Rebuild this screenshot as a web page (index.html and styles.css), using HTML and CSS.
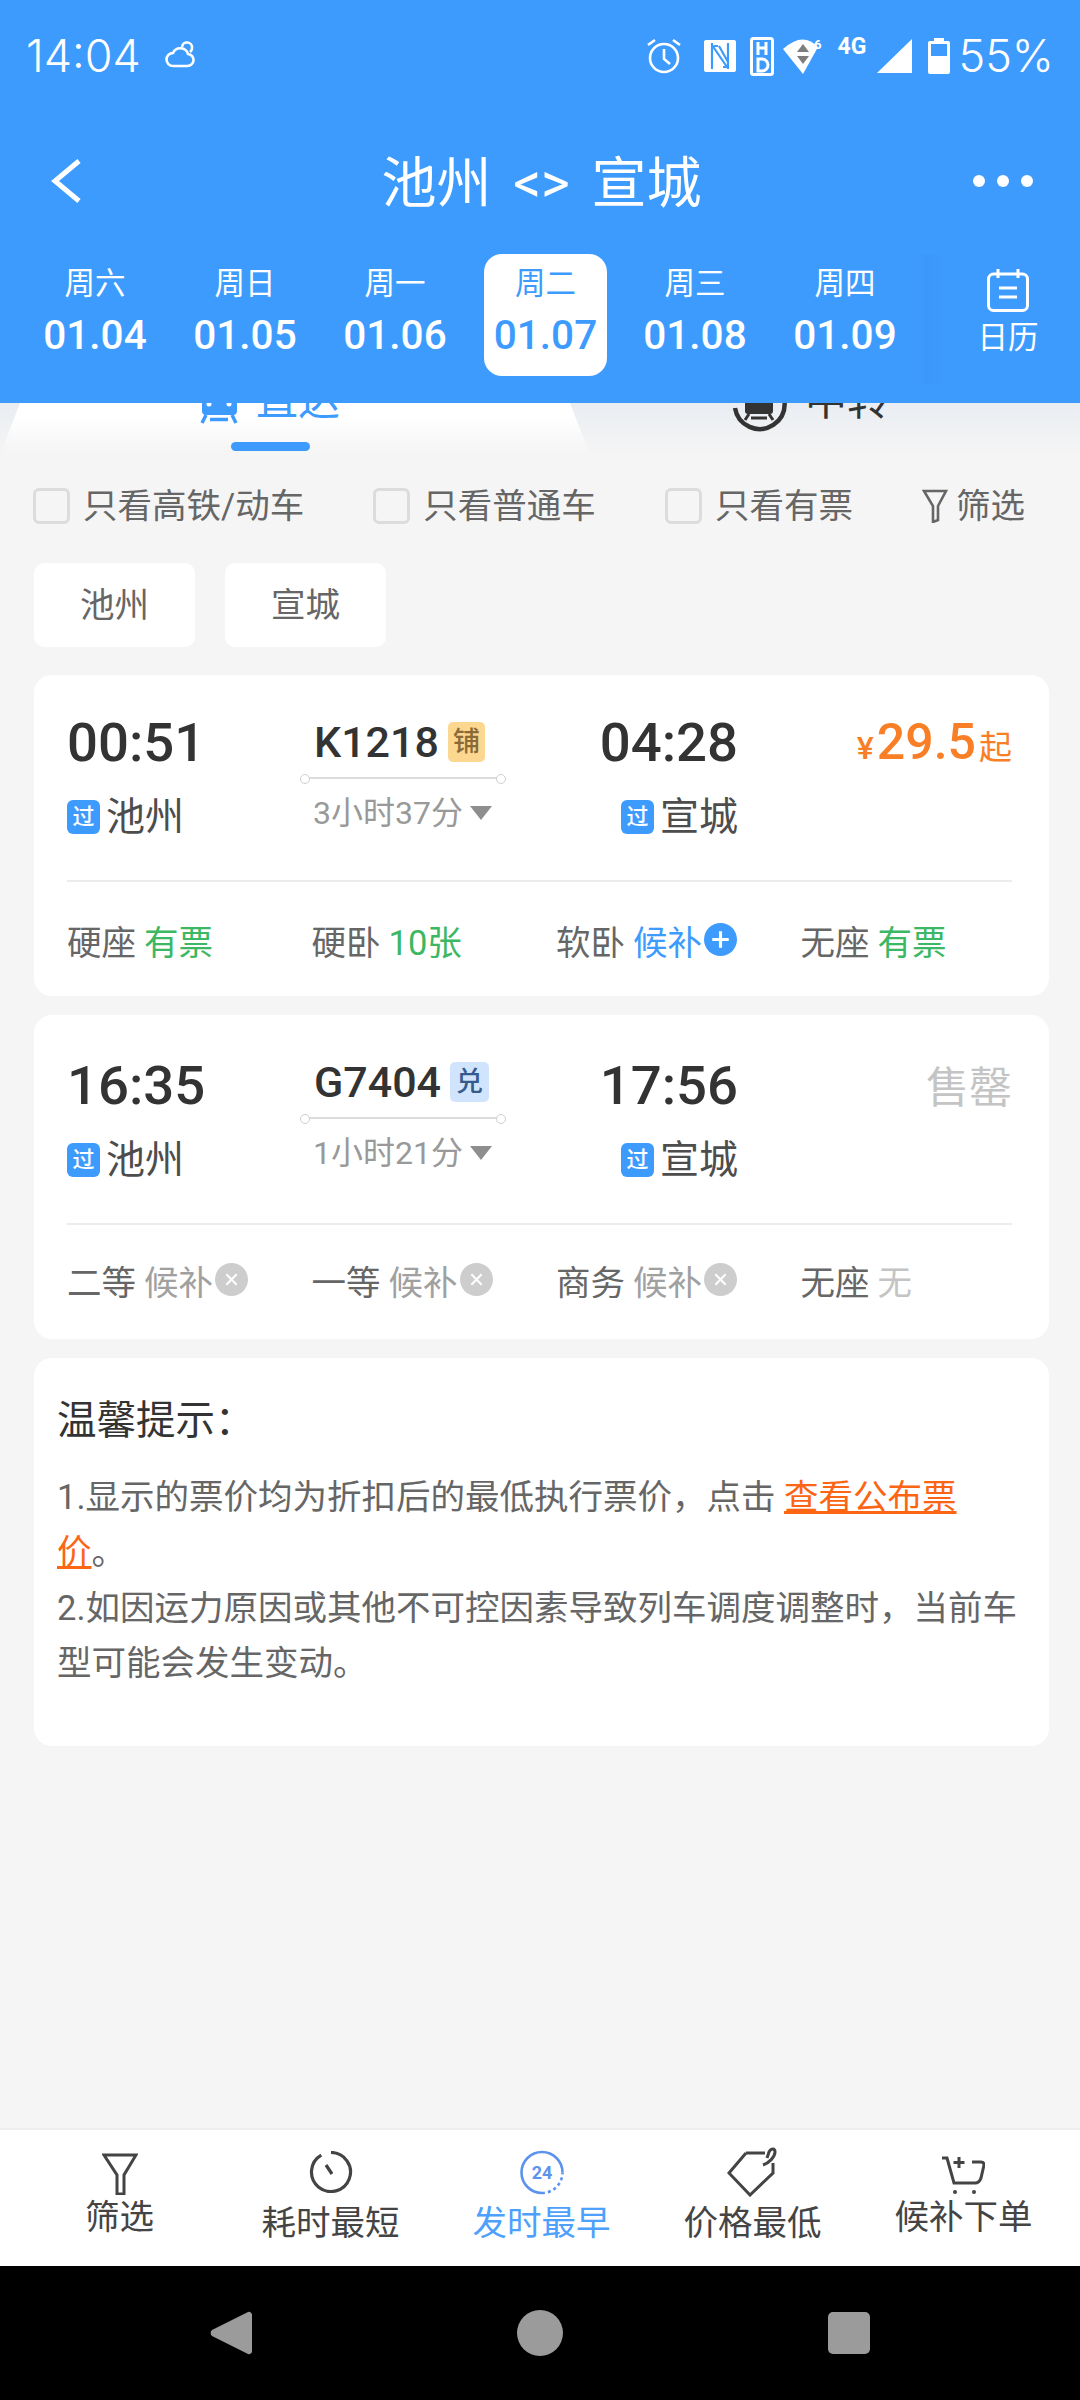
FILE: index.html
```html
<!DOCTYPE html>
<html lang="zh">
<head>
<meta charset="utf-8">
<title>池州 &lt;&gt; 宣城</title>
<link rel="stylesheet" href="styles.css">
</head>
<body>
<div class="page">
  <header class="header">
    <div class="status">
      <div class="status-left">
        <span class="clock">14:04</span>
        <svg class="ic-cloud" viewBox="0 0 30 28" fill="none" stroke="#fff" stroke-width="2.6"><path d="M8 25h14a6 6 0 0 0 1-12 8 8 0 0 0-15-1 6.500 6.500 0 0 0 0 13z"/><path d="M17 6a5 5 0 0 1 10 1 5 5 0 0 1-2 4"/></svg>
      </div>
      <div class="status-right">
        <svg class="ic-alarm" viewBox="0 0 36 36" fill="none" stroke="#fff" stroke-width="2.6"><circle cx="18" cy="20" r="14"/><path d="M18 11v10l6 5M2 7l7-5M34 7l-7-5"/></svg>
        <svg class="ic-nfc" viewBox="0 0 32 32"><rect width="32" height="32" rx="2" fill="#fff"/><path d="M8 3v26M8 5l15 22M15 6l9 16M24 3v26M10 6h4M19 27h4" stroke="#3e9bfe" stroke-width="2.200" fill="none"/></svg>
        <svg class="ic-hd" viewBox="0 0 24 39"><rect x="1.500" y="1.500" width="21" height="36" rx="2" fill="none" stroke="#fff" stroke-width="3"/><path d="M8 5v13M16 5v13M8 11h8" stroke="#fff" stroke-width="3" fill="none"/><path d="M8 22h4a5 5 0 0 1 0 12H8z" stroke="#fff" stroke-width="3" fill="none"/></svg>
        <svg class="ic-wifi" viewBox="0 0 42 36"><path d="M1 11Q21-7 36 9L21 36z" fill="#fff"/><path d="M21 6l6 8H15z" fill="#7d7d7d"/><path d="M21 26l6-8H15z" fill="#7d7d7d"/><text x="32" y="11" class="wifi-six">6</text></svg>
        <span class="net">4G</span>
        <svg class="ic-signal" viewBox="0 0 35 34"><path d="M35 0v34H0z" fill="#fff"/></svg>
        <svg class="ic-batt" viewBox="0 0 22 36"><path d="M6 0h10v3h4a2 2 0 0 1 2 2v29a2 2 0 0 1-2 2H2a2 2 0 0 1-2-2V5a2 2 0 0 1 2-2h4z" fill="#fff"/><rect x="3" y="6" width="16" height="12" fill="#3e9bfe"/></svg>
        <span class="pct">55%</span>
      </div>
    </div>
    <div class="nav">
      <svg class="ic-back" viewBox="0 0 32 44" fill="none" stroke="#fff" stroke-width="5"><path d="M29 2L5 22l24 20"/></svg>
      <h1 class="title">池州 &lt;&gt; 宣城</h1>
      <div class="dots"><i></i><i></i><i></i></div>
    </div>
    <div class="dates">
      <div class="date"><span class="wk">周六</span><span class="dd">01.04</span></div>
      <div class="date"><span class="wk">周日</span><span class="dd">01.05</span></div>
      <div class="date"><span class="wk">周一</span><span class="dd">01.06</span></div>
      <div class="date date-on"><span class="wk">周二</span><span class="dd">01.07</span></div>
      <div class="date"><span class="wk">周三</span><span class="dd">01.08</span></div>
      <div class="date"><span class="wk">周四</span><span class="dd">01.09</span></div>
      <div class="cal">
        <svg class="ic-cal" viewBox="0 0 42 44" fill="none" stroke="#fff" stroke-width="3"><rect x="1.500" y="6" width="39" height="36.500" rx="5"/><path d="M11 1v9M31 1v9M12 20h18M12 29h18"/></svg>
        <span class="cal-t">日历</span>
      </div>
    </div>
  </header>

  <main class="main">
    <div class="tabs">
      <div class="tab tab-direct">
        <div class="tab-label tab-label-on">
          <svg class="ic-train" viewBox="0 0 38 40"><path d="M7 2h24a6 6 0 0 1 6 6v19a4 4 0 0 1-4 4H6a4 4 0 0 1-4-4V8a6 6 0 0 1 5-6z" fill="#3e9bfe"/><circle cx="9" cy="20" r="2.500" fill="#fff"/><circle cx="29" cy="20" r="2.500" fill="#fff"/><path d="M6 31L2 39M32 31l4 8M10 35.500h18" stroke="#3e9bfe" stroke-width="3.500" fill="none"/></svg>
          <span>直达</span>
        </div>
        <i class="tab-bar"></i>
      </div>
      <div class="tab tab-transfer">
        <div class="tab-label">
          <svg class="ic-transfer" viewBox="0 0 56 56" fill="none"><path d="M4 32A25 25 0 1 0 4 24" stroke="#333" stroke-width="4.500"/><path d="M17 12h22a3 3 0 0 1 3 3v20a3 3 0 0 1-3 3H17a3 3 0 0 1-3-3V15a3 3 0 0 1 3-3z" fill="#333"/><path d="M18 38l-4 6M38 38l4 6M20 42h16" stroke="#333" stroke-width="3"/></svg>
          <span>中转</span>
        </div>
      </div>
    </div>

    <div class="filters">
      <label class="chk"><i class="box"></i>只看高铁/动车</label>
      <label class="chk"><i class="box"></i>只看普通车</label>
      <label class="chk"><i class="box"></i>只看有票</label>
      <div class="chk chk-f">
        <svg class="ic-filter-s" viewBox="0 0 26 34" fill="none" stroke="#666" stroke-width="2.600"><path d="M2 2h22L16 17v14l-5 2V17z"/></svg>筛选
      </div>
    </div>

    <div class="chips"><span class="chip">池州</span><span class="chip">宣城</span></div>

    <section class="card">
      <div class="top">
        <div class="col-dep">
          <div class="time">00:51</div>
          <div class="stn"><b class="pass">过</b>池州</div>
        </div>
        <div class="col-mid">
          <div class="train">K1218<b class="tag tag-y">铺</b></div>
          <i class="track"></i>
          <div class="dur">3小时37分<i class="tri"></i></div>
        </div>
        <div class="col-arr">
          <div class="time">04:28</div>
          <div class="stn"><b class="pass">过</b>宣城</div>
        </div>
        <div class="col-price">
          <div class="price"><span class="yen">¥</span>29.5<span class="qi">起</span></div>
        </div>
      </div>
      <div class="seats">
        <div class="seat">硬座<span class="v v-g">有票</span></div>
        <div class="seat">硬卧<span class="v v-g">10张</span></div>
        <div class="seat">软卧<span class="v v-b">候补</span><svg class="ic-st" viewBox="0 0 32 32"><circle cx="16" cy="16" r="16" fill="#3e9bfe"/><path d="M16 8v16M8 16h16" stroke="#fff" stroke-width="3"/></svg></div>
        <div class="seat">无座<span class="v v-g">有票</span></div>
      </div>
    </section>

    <section class="card card-b">
      <div class="top">
        <div class="col-dep">
          <div class="time">16:35</div>
          <div class="stn"><b class="pass">过</b>池州</div>
        </div>
        <div class="col-mid">
          <div class="train">G7404<b class="tag tag-b">兑</b></div>
          <i class="track"></i>
          <div class="dur">1小时21分<i class="tri"></i></div>
        </div>
        <div class="col-arr">
          <div class="time">17:56</div>
          <div class="stn"><b class="pass">过</b>宣城</div>
        </div>
        <div class="col-price">
          <div class="soldout">售罄</div>
        </div>
      </div>
      <div class="seats">
        <div class="seat">二等<span class="v v-n">候补</span><svg class="ic-st" viewBox="0 0 32 32"><circle cx="16" cy="16" r="16" fill="#cdcdcd"/><path d="M11 11l10 10M21 11L11 21" stroke="#fff" stroke-width="2"/></svg></div>
        <div class="seat">一等<span class="v v-n">候补</span><svg class="ic-st" viewBox="0 0 32 32"><circle cx="16" cy="16" r="16" fill="#cdcdcd"/><path d="M11 11l10 10M21 11L11 21" stroke="#fff" stroke-width="2"/></svg></div>
        <div class="seat">商务<span class="v v-n">候补</span><svg class="ic-st" viewBox="0 0 32 32"><circle cx="16" cy="16" r="16" fill="#cdcdcd"/><path d="M11 11l10 10M21 11L11 21" stroke="#fff" stroke-width="2"/></svg></div>
        <div class="seat">无座<span class="v v-l">无</span></div>
      </div>
    </section>

    <section class="notice">
      <h2 class="notice-t">温馨提示：</h2>
      <p class="notice-p">1.显示的票价均为折扣后的最低执行票价，点击 <a class="lnk">查看公布票价</a>。<br>2.如因运力原因或其他不可控因素导致列车调度调整时，当前车型可能会发生变动。</p>
    </section>
  </main>

  <nav class="bar">
    <div class="bar-i bar-i-up">
      <svg class="ic-b1" viewBox="0 0 36 42" fill="none" stroke="#444" stroke-width="3"><path d="M2 2h32L22 22v19h-7V22z"/></svg>
      <span>筛选</span>
    </div>
    <div class="bar-i">
      <svg class="ic-b2" viewBox="0 0 44 42" fill="none" stroke="#444" stroke-width="3.200"><path d="M12.250 4.100A19.500 19.500 0 1 0 22 1.500"/><path d="M17 14l6 9"/></svg>
      <span>耗时最短</span>
    </div>
    <div class="bar-i bar-on">
      <svg class="ic-b3" viewBox="0 0 44 45" fill="none"><path d="M42.500 22.500A20.500 20.500 0 1 0 22 43" stroke="#5b93ee" stroke-width="2.600"/><path d="M22 43A20.500 20.500 0 0 0 42.500 22.500" stroke="#5b93ee" stroke-width="2.600" stroke-dasharray="3 3"/><text x="22" y="29" class="b3-t">24</text></svg>
      <span>发时最早</span>
    </div>
    <div class="bar-i">
      <svg class="ic-b4" viewBox="0 0 52 50" fill="none" stroke="#444" stroke-width="3"><path d="M19 6h19M46 16v10L23 48 2 26 19 6"/><path d="M36 18c6-2 12-8 12-13 0-4-4-4-6 0l-2 6"/></svg>
      <span>价格最低</span>
    </div>
    <div class="bar-i bar-i-up">
      <svg class="ic-b5" viewBox="0 0 45 40" fill="none" stroke="#444" stroke-width="3"><path d="M2 3h5l7 25h21c3 0 5-2 6-5l3-13c0-2-1-3-3-3h-9"/><path d="M19 2v11M13.500 7.500h11"/><circle cx="15" cy="37" r="2" fill="#444" stroke="none"/><circle cx="34" cy="37" r="2" fill="#444" stroke="none"/></svg>
      <span>候补下单</span>
    </div>
  </nav>

  <div class="sysnav">
    <svg class="ic-sn1" viewBox="0 0 42 46"><path d="M38 2a3 3 0 0 1 4 3v36a3 3 0 0 1-4 3L2 26a4 4 0 0 1 0-6z" fill="#9b9b9b"/></svg>
    <i class="sn-c"></i>
    <i class="sn-s"></i>
  </div>
</div>
</body>
</html>
```

FILE: styles.css
```css
* { box-sizing: border-box; }
html, body { margin: 0; padding: 0; }
body { font-family: Roboto, "Noto Sans CJK SC", sans-serif; }
svg { display: block; flex: none; }
i, b { font-style: normal; font-weight: normal; }
.page { width: 1080px; height: 2400px; overflow: hidden; display: flex; flex-direction: column; background: #f5f5f5; }

/* header */
.header { height: 403px; flex: none; background: #3e9bfe; color: #fff; }
.status { height: 110px; padding: 37px 26px 0 26px; display: flex; justify-content: space-between; align-items: flex-start; }
.status-left { display: flex; align-items: center; height: 38px; }
.clock { font-family: Inter, Roboto, sans-serif; font-size: 45px; font-weight: 300; line-height: 38px; }
.ic-cloud { width: 30px; height: 28px; margin-left: 24px; margin-top: -3px; }
.status-right { display: flex; align-items: center; height: 38px; }
.ic-alarm { width: 36px; height: 36px; }
.ic-nfc { width: 32px; height: 32px; margin-left: 22px; }
.ic-hd { width: 24px; height: 39px; margin-left: 14px; }
.ic-wifi { width: 42px; height: 36px; margin-left: 8px; }
.wifi-six { font: 700 13px Roboto, sans-serif; fill: #fff; }
.net { font-size: 23px; font-weight: 700; line-height: 24px; margin-left: 13px; margin-top: -18px; width: 32px; }
.ic-signal { width: 35px; height: 34px; margin-left: 8px; }
.ic-batt { width: 22px; height: 36px; margin-left: 16px; }
.pct { font-family: Inter, Roboto, sans-serif; font-size: 45px; font-weight: 300; line-height: 38px; margin-left: 8px; }

.nav { height: 142px; padding: 0 47px 0 50px; display: grid; grid-template-columns: 1fr auto 1fr; align-items: center; }
.ic-back { width: 32px; height: 44px; }
.title { margin: 3px 0 0; font-size: 55px; font-weight: 400; line-height: 70px; word-spacing: 8px; }
.dots { display: flex; gap: 12px; justify-self: end; }
.dots i { width: 12px; height: 12px; border-radius: 50%; background: #fff; }

.dates { display: flex; padding-left: 20px; margin-top: 2px; height: 122px; }
.date { width: 150px; display: flex; flex-direction: column; align-items: center; padding-top: 12px; gap: 8px; }
.date-on { width: 123px; margin: 0 13px 0 14px; background: #fff; border-radius: 18px; color: #3e9bfe; }
.wk { font-size: 30.500px; line-height: 36px; }
.dd { font-size: 40.500px; font-weight: 500; line-height: 50px; white-space: nowrap; }
.cal { flex: 1; height: 130px; display: flex; flex-direction: column; align-items: center; padding: 14px 0 0 16px; background: linear-gradient(90deg, #3e9bfe 0, #3b97f9 6px, #3e9bfe 24px); }
.ic-cal { width: 42px; height: 44px; }
.cal-t { font-size: 30.500px; line-height: 36px; margin-top: 8px; }

/* main */
.main { flex: 1; min-height: 0; }
.tabs { height: 52px; overflow: hidden; display: flex; background: linear-gradient(#e9edf2, #f5f5f5); }
.tab { height: 52px; display: flex; flex-direction: column; align-items: center; padding-right: 50px; }
.tab-direct { width: 590px; background: linear-gradient(#fff 25%, #f5f5f5 95%); clip-path: polygon(20px 0, 570px 0, 590px 100%, 0 100%); }
.tab-transfer { width: 490px; }
.tab-label { display: flex; align-items: center; gap: 18px; font-size: 42px; line-height: 44px; height: 44px; margin-top: -24px; color: #333; flex: none; }
.tab-label-on { color: #3e9bfe; }
.ic-train { width: 38px; height: 40px; margin-top: 6px; }
.ic-transfer { width: 56px; height: 56px; margin-top: 6px; }
.tab-bar { display: block; width: 79px; height: 9px; border-radius: 5px; background: #3e9bfe; margin-top: 19px; flex: none; }

.filters { display: flex; justify-content: space-between; padding: 33px 55px 0 33px; height: 69px; }
.chk { display: flex; align-items: center; gap: 13px; height: 36px; font-size: 34.500px; line-height: 36px; color: #666; white-space: nowrap; }
.chk-f { gap: 8px; }
.box { width: 37px; height: 36px; border: 3px solid #dcdcdc; border-radius: 6px; flex: none; }
.ic-filter-s { width: 26px; height: 34px; }

.chips { display: flex; gap: 30px; padding-left: 34px; margin-top: 39px; }
.chip { height: 84px; width: 161px; padding-bottom: 6px; display: flex; align-items: center; justify-content: center; background: #fff; border-radius: 10px; font-size: 34.500px; color: #666; }

.card { margin: 28px 31px 0 34px; height: 321px; background: #fff; border-radius: 18px; }
.card-b { margin-top: 19px; height: 324px; }
.top { height: 207px; margin: 0 37px 0 33px; padding-top: 37px; display: flex; border-bottom: 2px solid #ececec; }
.card-b .top { height: 210px; padding-top: 40px; }
.col-dep { width: 235px; }
.col-mid { width: 205px; }
.card-b .col-mid { margin-top: -3px; }
.col-arr { width: 231px; display: flex; flex-direction: column; align-items: flex-end; }
.col-price { flex: 1; display: flex; justify-content: flex-end; }
.time { font-size: 54.500px; font-weight: 500; line-height: 60px; color: #333; }
.stn { display: flex; align-items: center; gap: 6px; font-size: 39px; line-height: 40px; color: #4d4d4d; margin-top: 25px; white-space: nowrap; }
.pass { width: 33px; height: 34px; border-radius: 6px; background: #3e9bfe; color: #fff; font-size: 22px; font-weight: 500; line-height: 34px; text-align: center; flex: none; }
.train { display: flex; align-items: center; height: 60px; padding-left: 12px; font-size: 43px; font-weight: 500; color: #333; white-space: nowrap; }
.tag { width: 37px; height: 40px; margin-left: 9px; border-radius: 5px; font-size: 27px; font-weight: 500; line-height: 40px; text-align: center; flex: none; }
.tag-y { background: #fbd78f; color: #8a6a36; }
.tag-b { background: #d0e5fd; color: #365a8c; width: 39px; }
.track { display: block; width: 202px; height: 2px; margin-top: 5px; background: #dcdcdc; position: relative; }
.track::before, .track::after { content: ""; position: absolute; top: -3px; width: 8px; height: 8px; border: 1px solid #cfcfcf; border-radius: 50%; background: #fff; }
.track::before { left: -2px; }
.track::after { right: -2px; }
.dur { display: flex; align-items: center; height: 40px; margin-top: 11px; padding-left: 11px; font-size: 32px; color: #999; white-space: nowrap; }
.tri { width: 0; height: 0; margin: 6px 0 0 7px; border-left: 11px solid transparent; border-right: 11px solid transparent; border-top: 14px solid #8e8e8e; }
.price { display: flex; align-items: baseline; height: 60px; line-height: 60px; font-size: 50px; font-weight: 500; color: #f97f27; white-space: nowrap; }
.yen { font-size: 32px; margin-right: 3px; }
.qi { font-size: 33px; font-weight: 400; margin-left: 3px; }
.soldout { font-size: 43px; line-height: 52px; padding-top: 7px; color: #c4c4c4; }

.seats { display: grid; grid-template-columns: repeat(4, 244.500px); padding: 40px 0 0 33px; }
.card-b .seats { padding-top: 37px; }
.seat { display: flex; align-items: center; height: 36px; font-size: 34.500px; color: #666; white-space: nowrap; }
.v { margin-left: 8px; }
.v-g { color: #3cb763; }
.v-b { color: #3e9bfe; }
.v-n { color: #a0a0a0; }
.v-l { color: #c4c4c4; }
.ic-st { width: 33px; height: 33px; margin-left: 2px; margin-top: -1px; }

.notice { margin: 19px 31px 0 34px; height: 388px; background: #fff; border-radius: 18px; padding: 40px 24px 0 23px; }
.notice-t { margin: 0; font-size: 39.500px; font-weight: 400; line-height: 46px; color: #333; }
.notice-p { margin: 26px 0 0; font-size: 34.500px; line-height: 55.300px; color: #666; }
.lnk { color: #fb6514; text-decoration: underline; }

/* bottom bar */
.bar { height: 138px; flex: none; display: grid; grid-template-columns: repeat(5, 211px); padding-left: 14px; background: #fff; border-top: 2px solid #eee; }
.bar-i { height: 136px; display: flex; flex-direction: column; align-items: center; font-size: 34.500px; line-height: 40px; color: #444; }
.bar-i span { white-space: nowrap; }
.bar-on { color: #4da0fb; }
.ic-b1 { width: 36px; height: 42px; margin-top: 23px; margin-bottom: 2px; }
.ic-b2 { width: 44px; height: 42px; margin-top: 21px; margin-bottom: 10px; }
.ic-b3 { width: 44px; height: 45px; margin-top: 20px; margin-bottom: 8px; }
.b3-t { font: 700 18px Roboto, sans-serif; fill: #5b93ee; text-anchor: middle; }
.ic-b4 { width: 52px; height: 50px; margin-top: 17px; margin-bottom: 6px; }
.ic-b5 { width: 45px; height: 40px; margin: 25px 3px 2px 0; }

.sysnav { height: 134px; flex: none; background: #000; display: flex; gap: 265px; align-items: center; padding-left: 210px; }
.ic-sn1 { width: 42px; height: 46px; }
.sn-c { width: 46px; height: 46px; border-radius: 50%; background: #9b9b9b; }
.sn-s { width: 42px; height: 42px; border-radius: 5px; background: #9b9b9b; }
```
